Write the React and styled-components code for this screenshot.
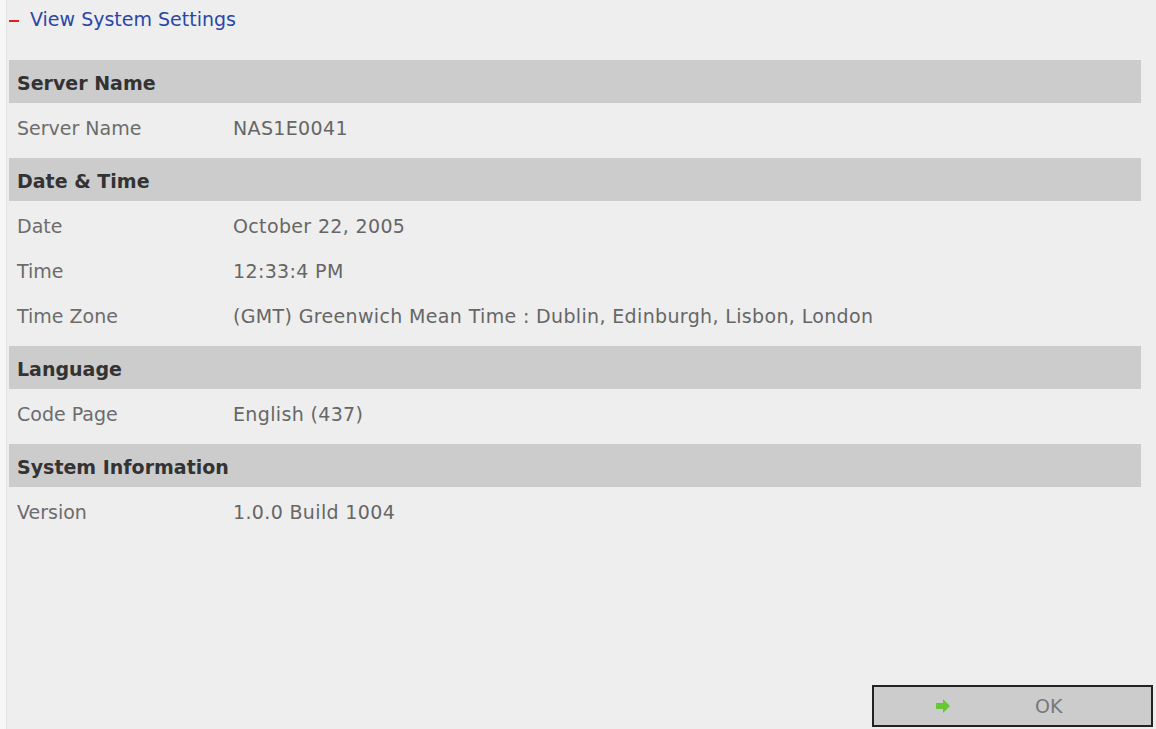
import React from 'react';
import styled, { createGlobalStyle } from 'styled-components';

const GlobalStyle = createGlobalStyle`
  html, body {
    margin: 0;
    padding: 0;
    background-color: #f6f6f6;
  }
  body {
    font-family: "DejaVu Sans", Verdana, sans-serif;
  }
`;

const Page = styled.div`
  display: flex;
  height: 729px;
  padding-left: 6px;
  box-sizing: border-box;
`;

const Panel = styled.div`
  flex: 1;
  display: flex;
  flex-direction: column;
  background-color: #eeeeee;
  border-left: 1px solid #e2e2e2;
  padding-left: 2px;
`;

const TitleRow = styled.div`
  height: 60px;
  box-sizing: border-box;
  display: flex;
  align-items: flex-start;
  padding: 8px 0 0 0;
  font-size: 19px;
  line-height: 23px;
  color: #2a47a6;
`;

const Dash = styled.span`
  flex: none;
  width: 10px;
  height: 2px;
  margin: 12px 11px 0 0;
  background-color: #e02020;
`;

const Sections = styled.div`
  padding-right: 15px;
`;

const Section = styled.section`
  margin-bottom: 10px;
`;

const SectionHeader = styled.div`
  height: 43px;
  display: flex;
  align-items: center;
  padding: 2px 0 0 8px;
  box-sizing: border-box;
  background-color: #cccccc;
  font-size: 19px;
  font-weight: bold;
  color: #333333;
`;

const Row = styled.div`
  height: 45px;
  display: grid;
  grid-template-columns: 216px 1fr;
  align-items: center;
  padding: 5px 0 0 8px;
  box-sizing: border-box;
  font-size: 19px;
`;

const Label = styled.span`
  color: #6c6c6c;
`;

const Value = styled.span`
  color: #666666;
  letter-spacing: 0.35px;
`;

const Spacer = styled.div`
  flex: 1;
`;

const Footer = styled.div`
  display: flex;
  justify-content: flex-end;
  padding: 0 3px 2px 0;
`;

const OkButton = styled.button`
  width: 281px;
  height: 42px;
  display: flex;
  align-items: center;
  padding: 0 0 0 61px;
  box-sizing: border-box;
  background-color: #cccccc;
  border: 2px solid #222222;
  font-family: "DejaVu Sans", Verdana, sans-serif;
  font-size: 19px;
  color: #777777;
  cursor: pointer;
`;

const ButtonText = styled.span`
  margin-left: 84px;
`;

const ArrowIcon = () => (
  <svg width="16" height="14" viewBox="0 0 16 14">
    <polygon points="1,4 8,4 8,0 15,7 8,14 8,10 1,10" fill="#66c933" />
  </svg>
);

const sections = [
  { title: 'Server Name', rows: [['Server Name', 'NAS1E0041']] },
  {
    title: 'Date & Time',
    rows: [
      ['Date', 'October 22, 2005'],
      ['Time', '12:33:4 PM'],
      ['Time Zone', '(GMT) Greenwich Mean Time : Dublin, Edinburgh, Lisbon, London'],
    ],
  },
  { title: 'Language', rows: [['Code Page', 'English (437)']] },
  { title: 'System Information', rows: [['Version', '1.0.0 Build 1004']] },
];

const App = () => {
  return (
    <Page>
      <GlobalStyle />
      <Panel>
        <TitleRow>
          <Dash />
          View System Settings
        </TitleRow>

        <Sections>
          {sections.map((section) => (
            <Section key={section.title}>
              <SectionHeader>{section.title}</SectionHeader>
              {section.rows.map(([label, value]) => (
                <Row key={label}>
                  <Label>{label}</Label>
                  <Value>{value}</Value>
                </Row>
              ))}
            </Section>
          ))}
        </Sections>

        <Spacer />

        <Footer>
          <OkButton>
            <ArrowIcon />
            <ButtonText>OK</ButtonText>
          </OkButton>
        </Footer>
      </Panel>
    </Page>
  );
};

export default App;
